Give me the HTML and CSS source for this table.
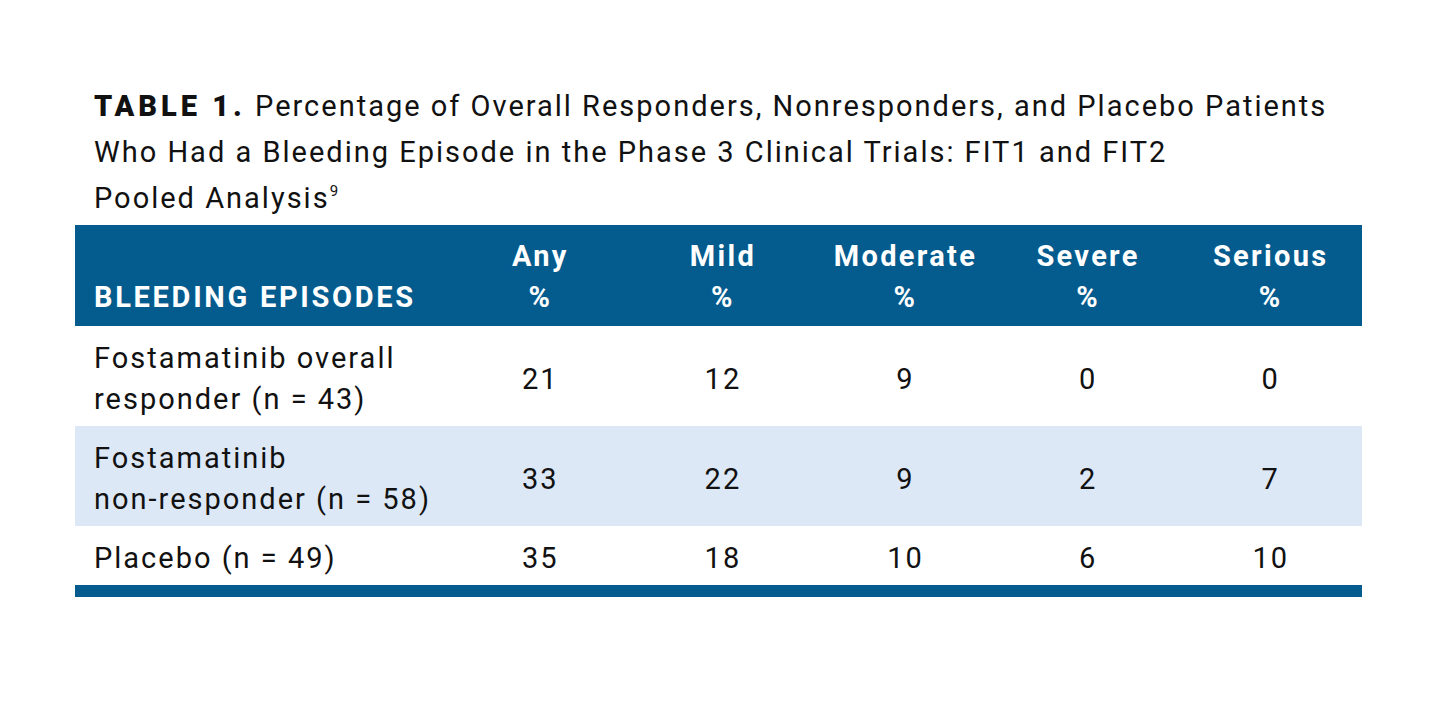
FILE: index.html
```html
<!DOCTYPE html>
<html lang="en">
<head>
<meta charset="utf-8">
<title>Table 1</title>
<link rel="stylesheet" href="styles.css">
</head>
<body>
<div class="figure">
  <p class="caption"><span class="label">TABLE 1.</span> Percentage of Overall Responders, Nonresponders, and Placebo Patients<br>Who Had a Bleeding Episode in the Phase 3 Clinical Trials: FIT1 and FIT2<br>Pooled Analysis<sup class="ref">9</sup></p>
  <table class="data">
    <colgroup>
      <col class="c-label">
      <col class="c-num"><col class="c-num"><col class="c-num"><col class="c-num"><col class="c-num">
    </colgroup>
    <thead>
      <tr>
        <th class="h-label">BLEEDING EPISODES</th>
        <th>Any<br>%</th>
        <th>Mild<br>%</th>
        <th>Moderate<br>%</th>
        <th>Severe<br>%</th>
        <th>Serious<br>%</th>
      </tr>
    </thead>
    <tbody>
      <tr>
        <td class="label-cell">Fostamatinib overall<br>responder (n = 43)</td>
        <td>21</td><td>12</td><td>9</td><td>0</td><td>0</td>
      </tr>
      <tr class="shaded">
        <td class="label-cell">Fostamatinib<br>non-responder (n = 58)</td>
        <td>33</td><td>22</td><td>9</td><td>2</td><td>7</td>
      </tr>
      <tr>
        <td class="label-cell">Placebo (n = 49)</td>
        <td>35</td><td>18</td><td>10</td><td>6</td><td>10</td>
      </tr>
    </tbody>
  </table>
  <div class="bar"></div>
</div>
</body>
</html>
```

FILE: styles.css
```css
html, body {
  margin: 0;
  padding: 0;
  background: #ffffff;
}

body {
  font-family: Roboto, "Liberation Sans", sans-serif;
  color: #111111;
}

.figure {
  width: 1287px;
  margin: 0 0 0 75px;
  padding-top: 83px;
}

.caption {
  margin: 0 0 4px 0;
  padding-left: 19px;
  font-size: 29px;
  line-height: 46px;
  font-weight: 400;
  letter-spacing: 2px;
  color: #111111;
  white-space: nowrap;
}

.label {
  font-weight: 900;
  letter-spacing: 4px;
}

.ref {
  font-size: 15px;
  line-height: 0;
  vertical-align: 12px;
  letter-spacing: 0;
}

.data {
  width: 1287px;
  border-collapse: collapse;
  border-spacing: 0;
  table-layout: fixed;
}

.c-label {
  width: 374px;
}

.c-num {
  width: 182.6px;
}

.data th {
  background: #045b8e;
  color: #ffffff;
  font-weight: 700;
  font-size: 29px;
  line-height: 41px;
  text-align: center;
  vertical-align: bottom;
  padding: 11px 0 8px 0;
  letter-spacing: 2.3px;
}

.data th.h-label {
  text-align: left;
  padding-left: 19px;
  letter-spacing: 2.7px;
}

.data td {
  font-size: 29px;
  line-height: 41px;
  font-weight: 400;
  text-align: center;
  vertical-align: middle;
  padding: 12px 0 6px 0;
  letter-spacing: 2px;
}

.data td.label-cell {
  text-align: left;
  padding-left: 19px;
  white-space: nowrap;
}

.shaded td {
  background: #dde8f6;
}

.bar {
  height: 12px;
  background: #045b8e;
}
```
